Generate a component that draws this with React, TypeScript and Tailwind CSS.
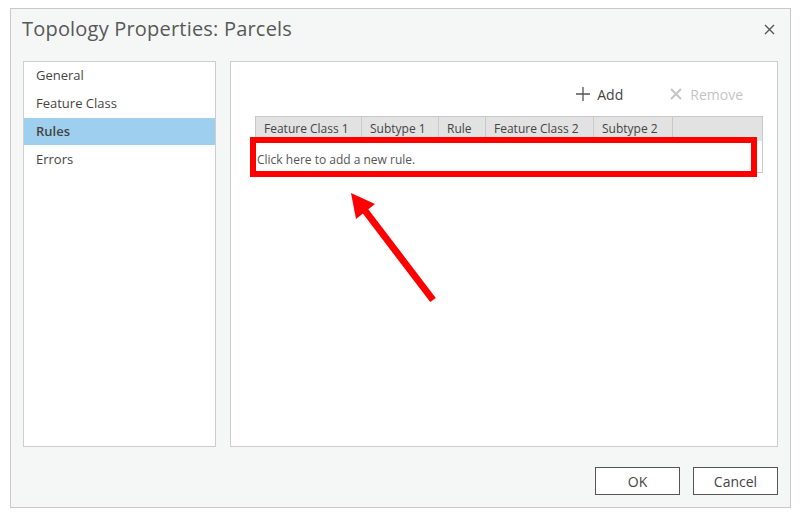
import React from "react";

const font = { fontFamily: '"Open Sans", "Noto Sans", "Liberation Sans", sans-serif' };

export default function App() {
  const cols = [
    { label: "Feature Class 1", w: 106 },
    { label: "Subtype 1", w: 77 },
    { label: "Rule", w: 47 },
    { label: "Feature Class 2", w: 108 },
    { label: "Subtype 2", w: 79 },
  ];
  return (
    <div className="relative w-[804px] h-[518px] bg-white overflow-hidden" style={font}>
      <div className="absolute left-0 top-0 w-full h-full pl-[10px] pt-[8px]">
        <div className="w-[781px] h-[500px] border border-[#cbc8c8] bg-[#f5f7f6] flex flex-col">
          <div className="h-[52px] flex items-start justify-between pl-[11px] pr-[15px] pt-[8px]">
            <div className="text-[20px] leading-[24px] text-[#585858] tracking-[0.2px]">Topology Properties: Parcels</div>
            <svg width="11" height="11" viewBox="0 0 11 11" className="mt-[7px]">
              <path d="M1 1L10 10M10 1L1 10" stroke="#555" strokeWidth="1.4" />
            </svg>
          </div>
          <div className="flex gap-[14px] px-[12px] h-[386px]">
            <div className="w-[193px] h-full border border-[#cfcccc] bg-white flex flex-col text-[13px] text-[#444]">
              <div className="h-[28px] flex items-center pl-[12px]">General</div>
              <div className="h-[28px] flex items-center pl-[12px]">Feature Class</div>
              <div className="h-[27px] flex items-center pl-[12px] bg-[#9fcfee] font-semibold text-[#444]">Rules</div>
              <div className="h-[29px] flex items-center pl-[12px]">Errors</div>
            </div>
            <div className="flex-1 h-full border border-[#cfcccc] bg-white flex flex-col pt-[22px]">
              <div className="h-[20px] flex items-center justify-end pr-[34px] text-[14px]">
                <div className="flex items-center text-[#444]">
                  <svg width="16" height="16" viewBox="0 0 16 16">
                    <path d="M8 1V15M1 8H15" stroke="#555" strokeWidth="1.3" />
                  </svg>
                  <span className="ml-[6px]">Add</span>
                </div>
                <div className="flex items-center text-[#c4c4c4] ml-[47px]">
                  <svg width="12" height="12" viewBox="0 0 12 12">
                    <path d="M1 1L11 11M11 1L1 11" stroke="#c4c4c4" strokeWidth="2" />
                  </svg>
                  <span className="ml-[8px]">Remove</span>
                </div>
              </div>
              <div className="mt-[12px] ml-[24px] w-[508px] border border-[#c9c9c9] flex flex-col">
                <div className="h-[24px] flex bg-[#e2e2e2] text-[12px] text-[#444]">
                  {cols.map((c) => (
                    <div
                      key={c.label}
                      className="h-full flex items-center pl-[8px] border-r border-[#c9c9c9] shrink-0"
                      style={{ width: c.w }}
                    >
                      {c.label}
                    </div>
                  ))}
                  <div className="flex-1" />
                </div>
                <div className="h-[31px] flex items-start pt-[10px] leading-[17px] pl-[1px] text-[12px] text-[#555] bg-white">
                  Click here to add a new rule.
                </div>
              </div>
            </div>
          </div>
          <div className="flex justify-end gap-[13px] pr-[12px] mt-[20px]">
            <button className="w-[85px] h-[28px] border border-[#555] bg-white text-[14px] text-[#444]">OK</button>
            <button className="w-[85px] h-[28px] border border-[#555] bg-white text-[14px] text-[#444]">Cancel</button>
          </div>
        </div>
      </div>
      <div className="absolute left-[250px] top-[137px] w-[507px] h-[40px] border-[6px] border-[#ff0000]" />
      <svg className="absolute left-0 top-0" width="804" height="518" viewBox="0 0 804 518">
        <line x1="433" y1="300" x2="363" y2="208" stroke="#ff0000" strokeWidth="7" />
        <polygon points="351,193 356,219 375,204" fill="#ff0000" />
      </svg>
    </div>
  );
}
